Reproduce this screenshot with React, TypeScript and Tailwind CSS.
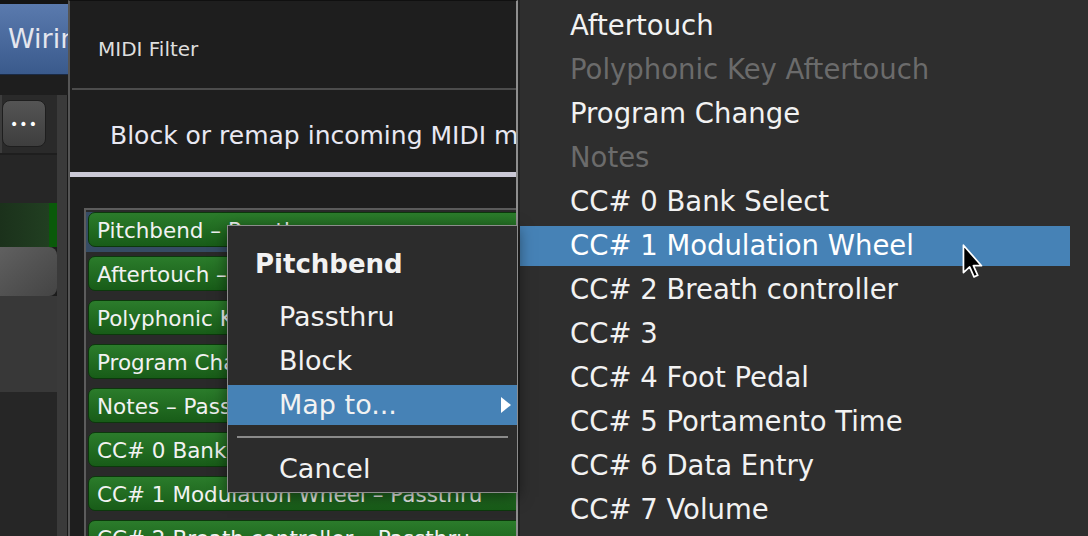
import React from "react";

const FONT = { fontFamily: '"DejaVu Sans", "Liberation Sans", sans-serif' };

const ROWS = [
  "Pitchbend – Passthru",
  "Aftertouch – Passthru",
  "Polyphonic Key Aftertouch – Passthru",
  "Program Change – Passthru",
  "Notes – Passthru",
  "CC# 0 Bank Select – Passthru",
  "CC# 1 Modulation Wheel – Passthru",
  "CC# 2 Breath controller – Passthru",
];

const MAP_ITEMS: { label: string; disabled?: boolean; active?: boolean }[] = [
  { label: "Aftertouch" },
  { label: "Polyphonic Key Aftertouch", disabled: true },
  { label: "Program Change" },
  { label: "Notes", disabled: true },
  { label: "CC# 0 Bank Select" },
  { label: "CC# 1 Modulation Wheel", active: true },
  { label: "CC# 2 Breath controller" },
  { label: "CC# 3" },
  { label: "CC# 4 Foot Pedal" },
  { label: "CC# 5 Portamento Time" },
  { label: "CC# 6 Data Entry" },
  { label: "CC# 7 Volume" },
];

function FilterRow({ text }: { text: string }) {
  return (
    <div className="h-[35px] w-[470px] shrink-0 flex items-center pl-[8px] pt-[3px] rounded-[7px] border border-[#0c380c] bg-gradient-to-b from-[#2b7c2b] to-[#185c18] text-[21.5px] text-[#f2f2f2] whitespace-nowrap">
      {text}
    </div>
  );
}

function SidePanel() {
  return (
    <div className="w-[68px] shrink-0 h-full flex flex-col bg-[#1c1c1c] overflow-hidden">
      <div className="h-[4px] bg-[#141414]" />
      <div className="h-[71px] flex items-center pl-[8px] bg-gradient-to-b from-[#5a7aae] to-[#3a5a8c] border-b border-[#1a2a44] text-[27px] text-[#e4e6ee] whitespace-nowrap">
        Wiring
      </div>
      <div className="h-[20px] bg-[#1e1e1e]" />
      <div className="flex-1 flex">
        <div className="w-[57px] flex flex-col">
          <div className="h-[58px] bg-[#2a2a2a] flex items-start pt-[5px] border-l-2 border-[#3c3c3c]">
            <div className="w-[44px] h-[47px] rounded-[8px] border border-[#1e1e1e] bg-gradient-to-b from-[#545454] to-[#3e3e3e] flex items-center justify-center text-white text-[14px] leading-none tracking-[1px]">
              •••
            </div>
          </div>
          <div className="h-[2px] bg-[#1e1e1e]" />
          <div className="h-[48px] bg-[#262626]" />
          <div className="h-[44px] flex">
            <div className="flex-1 bg-gradient-to-r from-[#1b311b] to-[#213f21]" />
            <div className="w-[8px] bg-[#0a5a0a]" />
          </div>
          <div className="h-[49px] rounded-r-[8px] bg-gradient-to-br from-[#606060] to-[#444444]" />
          <div className="h-[96px] bg-[#383838]" />
          <div className="flex-1 bg-[#262626]" />
        </div>
        <div className="w-[10px] bg-[#3a3a3a]" />
        <div className="w-[1px] bg-[#181818]" />
      </div>
    </div>
  );
}

function ContextMenu() {
  return (
    <div className="absolute left-[227px] top-[225px] w-[291px] h-[268px] border border-[#8c8c8c] bg-[#2c2c2c] pt-[16px] text-[27px] text-[#f2f2f2] shadow-[0_4px_14px_rgba(0,0,0,0.5)]">
      <div className="h-[44px] flex items-center pl-[27px] font-bold text-[26px]">Pitchbend</div>
      <div className="mt-[9px] h-[44px] flex items-center pl-[51px]">Passthru</div>
      <div className="h-[44px] flex items-center pl-[51px]">Block</div>
      <div className="mt-[2px] h-[40px] flex items-center justify-between pl-[51px] pr-[6px] bg-[#4682b6]">
        <span>Map to...</span>
        <svg width="10" height="16" viewBox="0 0 10 16">
          <path d="M0 0 L10 8 L0 16 Z" fill="#ffffff" />
        </svg>
      </div>
      <div className="mt-[11px] mx-[9px] h-[2px] bg-[#8a8a8a]" />
      <div className="mt-[9px] h-[44px] flex items-center pl-[51px]">Cancel</div>
    </div>
  );
}

function Cursor() {
  return (
    <svg className="absolute left-[962px] top-[244px]" width="24" height="36" viewBox="0 0 19 29">
      <path
        d="M1 1 L1 23 L6 18.5 L9.5 26.5 L12.5 25.2 L9 17.5 L15.5 17.5 Z"
        fill="#000000"
        stroke="#ffffff"
        strokeWidth="1.4"
        strokeLinejoin="round"
      />
    </svg>
  );
}

export default function App() {
  return (
    <div className="relative w-[1088px] h-[536px] overflow-hidden flex bg-[#1c1c1c]" style={FONT}>
      <SidePanel />

      <div className="w-[450px] shrink-0 h-full flex flex-col bg-[#1e1e1e] border-l-2 border-[#555555] border-r-2 border-r-[#8e8e8e] border-t border-t-[#101010] overflow-hidden">
        <div className="h-[87px] shrink-0 flex items-center pl-[28px] pt-[8px] text-[20px] text-[#dedede]">MIDI Filter</div>
        <div className="ml-[2px] h-[2px] shrink-0 bg-[#4c4c4c]" />
        <div className="h-[82px] shrink-0 flex items-center pl-[40px] pt-[10px] text-[25px] text-[#e8e8f2] whitespace-nowrap">
          Block or remap incoming MIDI messages
        </div>
        <div className="h-[5px] shrink-0 bg-[#cbc9d6]" />
        <div className="mt-[31px] ml-[14px] flex-1 flex flex-col border-l-2 border-t-2 border-[#5c5c5c] bg-[#2a2a2a] pt-[2px] pl-[2px] overflow-hidden">
          <div className="-ml-[2px] pl-[2px] pb-[5px] mb-[4px] bg-[#364c64]">
            <FilterRow text={ROWS[0]} />
          </div>
          <div className="flex flex-col gap-[9px]">
            {ROWS.slice(1).map((r) => (
              <FilterRow key={r} text={r} />
            ))}
          </div>
        </div>
      </div>

      <div className="flex-1 h-full bg-[#2e2e2e] border-l-2 border-[#222222] pt-[4px] pr-[18px]">
        {MAP_ITEMS.map((item) => (
          <div key={item.label} className="h-[44px] py-[2px]">
            <div
              className={
                "h-[40px] flex items-center pl-[50px] text-[27.5px] whitespace-nowrap " +
                (item.active ? "bg-[#4682b6] text-white" : item.disabled ? "text-[#6b6b6b]" : "text-[#f2f2f2]")
              }
            >
              {item.label}
            </div>
          </div>
        ))}
      </div>

      <ContextMenu />
      <Cursor />
    </div>
  );
}
